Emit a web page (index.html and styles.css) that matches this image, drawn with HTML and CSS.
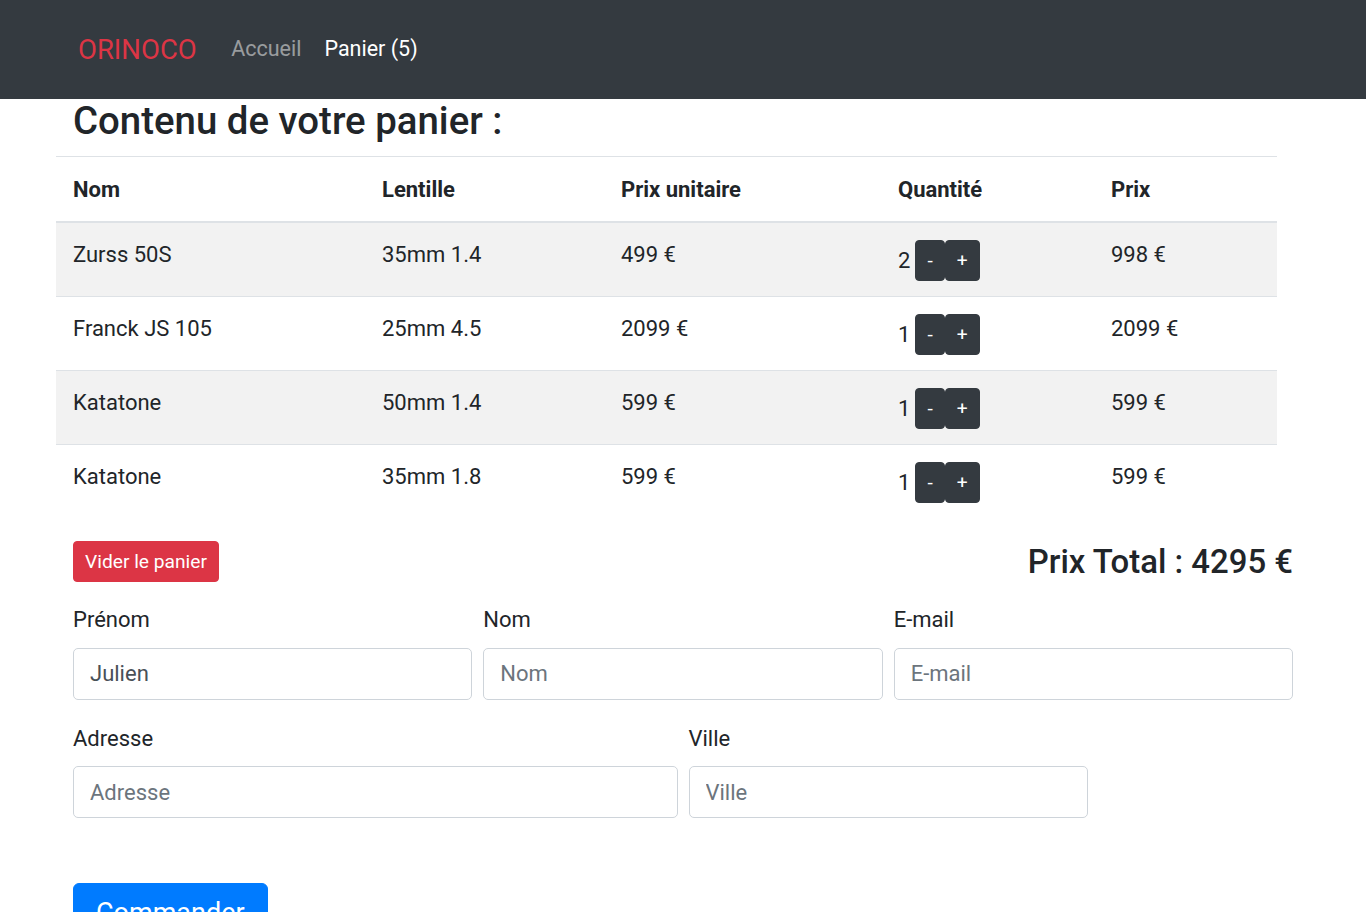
FILE: index.html
```html
<!DOCTYPE html>
<html lang="fr">
<head>
<meta charset="utf-8">
<title>Orinoco - Panier</title>
<link rel="stylesheet" href="styles.css">
</head>
<body>
<nav class="navbar">
  <a class="brand" href="#">ORINOCO</a>
  <a class="nav-link" href="#">Accueil</a>
  <a class="nav-link active" href="#">Panier (5)</a>
</nav>
<main class="page">
  <h2 class="title">Contenu de votre panier :</h2>
  <div class="table-wrap">
    <table class="cart">
      <colgroup>
        <col class="c1"><col class="c2"><col class="c3"><col class="c4"><col class="c5">
      </colgroup>
      <thead>
        <tr><th>Nom</th><th>Lentille</th><th>Prix unitaire</th><th>Quantité</th><th>Prix</th></tr>
      </thead>
      <tbody>
        <tr>
          <td>Zurss 50S</td><td>35mm 1.4</td><td>499 €</td>
          <td><div class="qty"><span class="num">2</span><button class="btn-sm">-</button><button class="btn-sm">+</button></div></td>
          <td>998 €</td>
        </tr>
        <tr>
          <td>Franck JS 105</td><td>25mm 4.5</td><td>2099 €</td>
          <td><div class="qty"><span class="num">1</span><button class="btn-sm">-</button><button class="btn-sm">+</button></div></td>
          <td>2099 €</td>
        </tr>
        <tr>
          <td>Katatone</td><td>50mm 1.4</td><td>599 €</td>
          <td><div class="qty"><span class="num">1</span><button class="btn-sm">-</button><button class="btn-sm">+</button></div></td>
          <td>599 €</td>
        </tr>
        <tr>
          <td>Katatone</td><td>35mm 1.8</td><td>599 €</td>
          <td><div class="qty"><span class="num">1</span><button class="btn-sm">-</button><button class="btn-sm">+</button></div></td>
          <td>599 €</td>
        </tr>
      </tbody>
    </table>
  </div>
  <div class="summary">
    <button class="btn-danger">Vider le panier</button>
    <h4 class="total">Prix Total : 4295 €</h4>
  </div>
  <form class="order-form">
    <div class="field span2">
      <label for="prenom">Prénom</label>
      <input id="prenom" type="text" value="Julien" placeholder="Prénom">
    </div>
    <div class="field span2">
      <label for="nom">Nom</label>
      <input id="nom" type="text" placeholder="Nom">
    </div>
    <div class="field span2">
      <label for="email">E-mail</label>
      <input id="email" type="email" placeholder="E-mail">
    </div>
    <div class="field span3">
      <label for="adresse">Adresse</label>
      <input id="adresse" type="text" placeholder="Adresse">
    </div>
    <div class="field span2">
      <label for="ville">Ville</label>
      <input id="ville" type="text" placeholder="Ville">
    </div>
  </form>
  <button class="btn-primary">Commander</button>
</main>
</body>
</html>
```

FILE: styles.css
```css
* { box-sizing: border-box; }
html, body { margin: 0; padding: 0; }
body {
  font-family: Roboto, "Liberation Sans", sans-serif;
  font-size: 22px;
  line-height: 1.5;
  color: #212529;
  background: #fff;
  overflow: hidden;
}
.navbar {
  height: 99px;
  background: #343a40;
  display: flex;
  align-items: center;
  padding-left: 78px;
}
.navbar a { text-decoration: none; }
.brand {
  color: #dc3545;
  font-size: 27.5px;
  line-height: 42px;
  margin-right: 23px;
}
.nav-link {
  color: rgba(255,255,255,.5);
  font-size: 21.5px;
  padding: 0 11.5px;
}
.nav-link.active { color: #fff; }

.page { padding: 0 73px; }
.title {
  margin: 0 0 14px;
  font-size: 38.4px;
  font-weight: 500;
  line-height: 43px;
}
.table-wrap { margin: 0 16px 0 -17px; }
.cart {
  width: 1221px;
  border-collapse: separate;
  border-spacing: 0;
  table-layout: fixed;
}
.c1 { width: 309px; }
.c2 { width: 239px; }
.c3 { width: 277px; }
.c4 { width: 213px; }
.c5 { width: 183px; }
.cart th {
  text-align: left;
  font-weight: 700;
  line-height: 30px;
  padding: 18px 17px 16px;
  border-top: 1px solid #dee2e6;
  border-bottom: 2px solid #dee2e6;
}
.cart td {
  vertical-align: top;
  line-height: 30px;
  padding: 17px 17px 15px;
  height: 74px;
  border-bottom: 1px solid #dee2e6;
}
.cart tbody tr:nth-child(odd) td { background: #f2f2f2; }
.cart tbody tr:last-child td { border-bottom: 0; height: 73px; }
.qty {
  display: flex;
  align-items: center;
  height: 41px;
}
.num { margin-right: 5px; }
.btn-sm {
  height: 41px;
  padding: 0 11px;
  background: #343a40;
  color: #fff;
  border: 1px solid #343a40;
  border-radius: 4px;
  font-family: inherit;
  font-size: 19.2px;
  line-height: 1;
}
.summary {
  margin-top: 23px;
  height: 41px;
  display: flex;
  justify-content: space-between;
  align-items: center;
  margin-bottom: 21px;
}
.btn-danger {
  height: 41px;
  padding: 0 11px;
  background: #dc3545;
  color: #fff;
  border: 1px solid #dc3545;
  border-radius: 4px;
  font-family: inherit;
  font-size: 19.2px;
  line-height: 1;
}
.total {
  margin: 0;
  font-size: 32.9px;
  font-weight: 500;
  line-height: 40px;
}
.order-form {
  display: grid;
  grid-template-columns: repeat(6, 1fr);
  column-gap: 11px;
  row-gap: 22px;
}
.span2 { grid-column: span 2; }
.span3 { grid-column: span 3; }
.field label {
  display: block;
  line-height: 33.6px;
  margin-bottom: 11px;
}
.field input {
  display: block;
  width: 100%;
  height: 52px;
  padding: 0 16px;
  font-family: inherit;
  font-size: 22px;
  color: #495057;
  border: 1px solid #ced4da;
  border-radius: 5px;
  background: #fff;
}
.field input::placeholder { color: #6c757d; }
.btn-primary {
  margin-top: 65px;
  padding: 8px 22px;
  background: #007bff;
  color: #fff;
  border: 1px solid #007bff;
  border-radius: 6px;
  font-family: inherit;
  font-size: 27px;
  line-height: 42px;
}
```
